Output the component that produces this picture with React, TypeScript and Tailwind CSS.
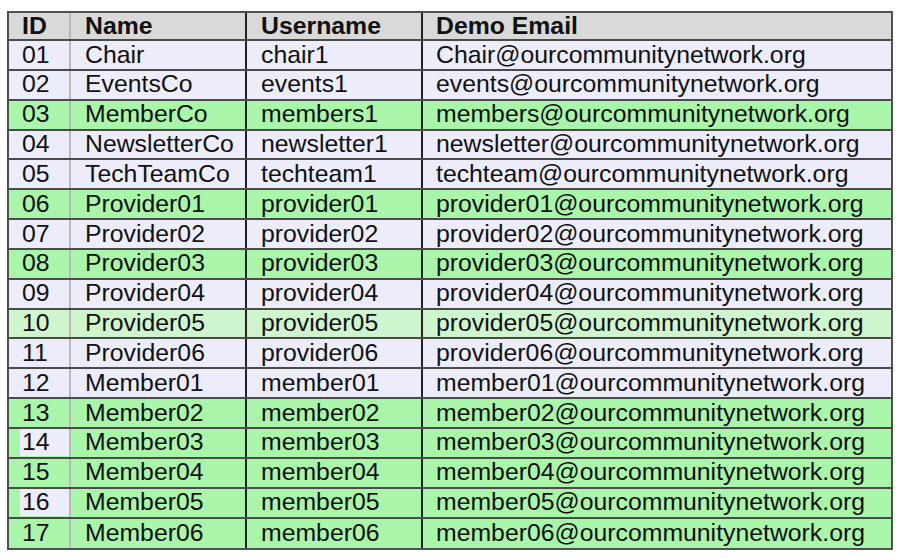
const rows: { id: string; name: string; user: string; email: string; tone: 'lav' | 'green' | 'pale' ; idMark?: boolean }[] = [
  { id: '01', name: 'Chair', user: 'chair1', email: 'Chair@ourcommunitynetwork.org', tone: 'lav' },
  { id: '02', name: 'EventsCo', user: 'events1', email: 'events@ourcommunitynetwork.org', tone: 'lav' },
  { id: '03', name: 'MemberCo', user: 'members1', email: 'members@ourcommunitynetwork.org', tone: 'green' },
  { id: '04', name: 'NewsletterCo', user: 'newsletter1', email: 'newsletter@ourcommunitynetwork.org', tone: 'lav' },
  { id: '05', name: 'TechTeamCo', user: 'techteam1', email: 'techteam@ourcommunitynetwork.org', tone: 'lav' },
  { id: '06', name: 'Provider01', user: 'provider01', email: 'provider01@ourcommunitynetwork.org', tone: 'green' },
  { id: '07', name: 'Provider02', user: 'provider02', email: 'provider02@ourcommunitynetwork.org', tone: 'lav' },
  { id: '08', name: 'Provider03', user: 'provider03', email: 'provider03@ourcommunitynetwork.org', tone: 'green' },
  { id: '09', name: 'Provider04', user: 'provider04', email: 'provider04@ourcommunitynetwork.org', tone: 'lav' },
  { id: '10', name: 'Provider05', user: 'provider05', email: 'provider05@ourcommunitynetwork.org', tone: 'pale' },
  { id: '11', name: 'Provider06', user: 'provider06', email: 'provider06@ourcommunitynetwork.org', tone: 'lav' },
  { id: '12', name: 'Member01', user: 'member01', email: 'member01@ourcommunitynetwork.org', tone: 'lav' },
  { id: '13', name: 'Member02', user: 'member02', email: 'member02@ourcommunitynetwork.org', tone: 'green' },
  { id: '14', name: 'Member03', user: 'member03', email: 'member03@ourcommunitynetwork.org', tone: 'green', idMark: true },
  { id: '15', name: 'Member04', user: 'member04', email: 'member04@ourcommunitynetwork.org', tone: 'green' },
  { id: '16', name: 'Member05', user: 'member05', email: 'member05@ourcommunitynetwork.org', tone: 'green', idMark: true },
  { id: '17', name: 'Member06', user: 'member06', email: 'member06@ourcommunitynetwork.org', tone: 'green' },
];

const toneClass = {
  lav: 'bg-[#ececfb]',
  green: 'bg-[#a9f5a9]',
  pale: 'bg-[#cff5cf]',
};

export default function App() {
  return (
    <div className="w-[900px] h-[559px] bg-white pt-[11px] pl-[7px] font-['Liberation_Sans',Arial,sans-serif] text-[#111] text-[24.8px] leading-none">
      <div className="w-[886px] border-2 border-[#505050] flex flex-col">
        <div className="grid grid-cols-[62px_176px_176px_1fr] h-[28px] bg-[#d9d9d9] font-bold border-b-2 border-[#4a4a4a]">
          <div className="pl-[13px] flex items-center border-r-2 border-[#b9b9b9]">ID</div>
          <div className="pl-[14px] flex items-center border-r-2 border-[#222]">Name</div>
          <div className="pl-[14px] flex items-center border-r-2 border-[#222]">Username</div>
          <div className="pl-[13px] flex items-center">Demo Email</div>
        </div>
        {rows.map((r, i) => (
          <div
            key={r.id}
            className={`grid grid-cols-[62px_176px_176px_1fr] h-[29.85px] ${toneClass[r.tone]} ${
              i < rows.length - 1 ? 'border-b-2 border-[#4a4a4a]' : ''
            }`}
          >
            <div className="pl-[11px] flex items-center border-r-2 border-[#b9b9b9]">
              {r.idMark ? (
                <span className="bg-[#ececfb] w-[50px] h-[27px] pl-[2px] flex items-center">{r.id}</span>
              ) : (
                <span className="pl-[2px]">{r.id}</span>
              )}
            </div>
            <div className="pl-[14px] flex items-center border-r-2 border-[#222]">{r.name}</div>
            <div className="pl-[14px] flex items-center border-r-2 border-[#222]">{r.user}</div>
            <div className="pl-[13px] flex items-center">{r.email}</div>
          </div>
        ))}
      </div>
    </div>
  );
}
